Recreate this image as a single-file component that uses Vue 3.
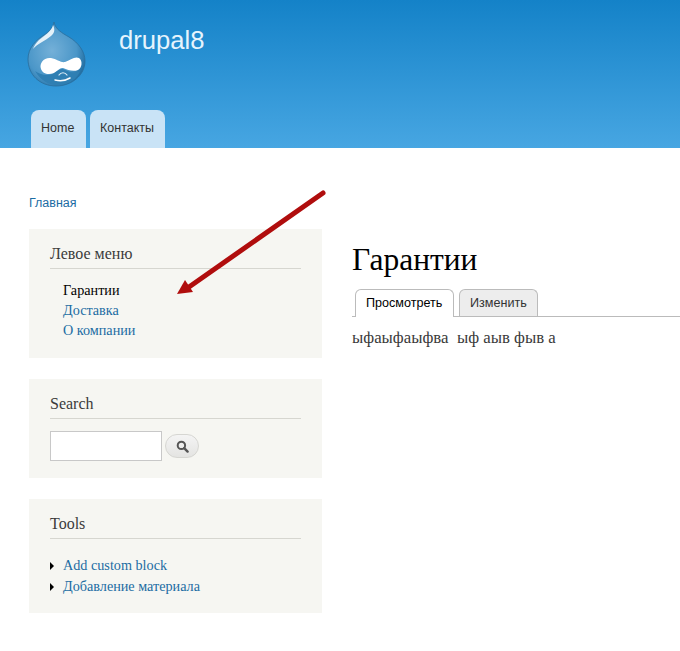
<template>
  <div class="page">
    <header class="head">
      <div class="brand">
        <svg class="logo" width="60" height="66" viewBox="0 0 60 66">
          <defs>
            <radialGradient id="drop" cx="0.42" cy="0.45" r="0.62">
              <stop offset="0" stop-color="#74b0d8" />
              <stop offset="0.7" stop-color="#4a96c8" />
              <stop offset="1" stop-color="#226fa3" />
            </radialGradient>
          </defs>
          <path d="M27 1 C28 8 35 12 42 16 C52 22 58 31 58 40 C58 54 45 65 29 65 C13 65 1 54 1 38 C1 27 9 19 17 14 C22 11 26 7 27 1 Z" fill="url(#drop)" stroke="#2a6d9c" stroke-width="0.8" />
          <path d="M26 4 C25 10 17 15 12 19 C9 22 7 25 6 28 C10 23 18 20 24 15 C28 12 28 8 26 4 Z" fill="#e4f1f9" />
          <path d="M8 50 C14 60 22 64 30 64 C42 64 50 58 53 50 C47 53 42 51 36 48 C31 47 27 54 20 54 C15 54 11 52 8 50 Z" fill="#2f7fb3" />
          <path d="M14 48 C12 42 17 36 24 37 C30 38 34 42 38 41 C43 39 48 35 52 37 C56 40 55 47 51 49 C46 51 41 49 36 47 C32 46 29 53 22 53 C18 53 15 51 14 48 Z" fill="#fff" />
          <path d="M28 59 C32 60 38 60 43 57" fill="none" stroke="#fff" stroke-width="1.5" stroke-linecap="round" />
          <path d="M32 54 C34 51 38 51 40 54" fill="none" stroke="#dcecf6" stroke-width="1.2" stroke-linecap="round" />
        </svg>
        <div class="site-name">drupal8</div>
      </div>
      <nav class="main-nav">
        <a class="main-tab home">Home</a>
        <a class="main-tab">Контакты</a>
      </nav>
    </header>

    <div class="crumb"><a>Главная</a></div>

    <div class="body">
      <aside class="side">
        <section class="block menu">
          <h2>Левое меню</h2>
          <ul class="plain">
            <li v-for="item in menu" :key="item.label" :class="{ active: item.active }">{{ item.label }}</li>
          </ul>
        </section>
        <section class="block search">
          <h2>Search</h2>
          <div class="search-row">
            <input class="search-input" type="text" />
            <button class="search-btn" aria-label="Search">
              <svg width="13" height="13" viewBox="0 0 13 13">
                <circle cx="5.4" cy="5.4" r="3.7" fill="none" stroke="#555" stroke-width="2" />
                <path d="M8.2 8.2 L11.6 11.6" stroke="#555" stroke-width="2.4" stroke-linecap="round" />
              </svg>
            </button>
          </div>
        </section>
        <section class="block tools">
          <h2>Tools</h2>
          <ul class="arrows">
            <li v-for="t in tools" :key="t">{{ t }}</li>
          </ul>
        </section>
      </aside>

      <main class="content">
        <h1>Гарантии</h1>
        <div class="tabs">
          <a class="tab current">Просмотреть</a>
          <a class="tab">Изменить</a>
        </div>
        <p class="text">ыфаыфаыфва&nbsp; ыф аыв фыв а</p>
      </main>
    </div>

    <svg class="arrow" width="160" height="115" viewBox="0 0 160 115">
      <path d="M147 4 L13 98" stroke="#b00d0d" stroke-width="5" stroke-linecap="round" />
      <path d="M1 105 L9 91 L17 103 Z" fill="#b00d0d" />
    </svg>
  </div>
</template>

<script setup>
const menu = [
  { label: 'Гарантии', active: true },
  { label: 'Доставка' },
  { label: 'О компании' },
]
const tools = ['Add custom block', 'Добавление материала']
</script>

<style>
html,
body {
  margin: 0;
  background: #fff;
}
</style>

<style scoped>
.page {
  position: relative;
  width: 680px;
  height: 651px;
  overflow: hidden;
  font-family: "Liberation Serif", serif;
}

.head {
  height: 148px;
  box-sizing: border-box;
  padding: 21px 0 0 27px;
  background: linear-gradient(#1482c8, #47a6e2);
  display: flex;
  flex-direction: column;
}

.brand {
  display: flex;
  height: 89px;
}

.logo {
  flex: none;
}

.site-name {
  margin: 4px 0 0 32px;
  font: 25.6px/30px "Liberation Sans", sans-serif;
  color: #e6f4fd;
}

.main-nav {
  display: flex;
  gap: 4px;
  padding-left: 4px;
}

.main-tab {
  height: 38px;
  padding: 0 10.5px 0 10px;
  background: #c9e3f6;
  border-radius: 8px 8px 0 0;
  color: #333;
  font: 12.5px/37px "Liberation Sans", sans-serif;
}

.home {
  width: 34.5px;
}

.crumb {
  margin: 47px 0 0 29px;
  font: 12.5px/16px "Liberation Sans", sans-serif;
}

.crumb a {
  color: #1b6ca3;
}

.body {
  display: flex;
  margin: 18px 0 0 29px;
}

.side {
  width: 293px;
  flex: none;
  display: flex;
  flex-direction: column;
  gap: 21px;
}

.block {
  background: #f6f6f2;
  padding: 15px 21px 0;
  box-sizing: border-box;
}

.menu {
  height: 129px;
}

.search {
  height: 99px;
}

.tools {
  height: 114px;
}

h2 {
  margin: 0;
  height: 24px;
  font-size: 16px;
  line-height: 20px;
  font-weight: 400;
  color: #3b3b3b;
  border-bottom: 1px solid #d6d6d0;
}

ul {
  margin: 0;
  padding: 0;
  list-style: none;
  font-size: 14.2px;
  color: #1b6ca3;
}

.plain {
  padding: 11px 0 0 13px;
}

.plain li {
  height: 20px;
  line-height: 20px;
}

.plain .active {
  color: #000;
}

.search-row {
  display: flex;
  align-items: center;
  gap: 3px;
  margin-top: 12px;
}

.search-input {
  width: 112px;
  height: 30px;
  box-sizing: border-box;
  border: 1px solid #c8c8c8;
  background: #fff;
  padding: 0;
  margin: 0;
}

.search-btn {
  width: 34px;
  height: 24px;
  padding: 0;
  border: 1px solid #d6d6d2;
  border-radius: 12px;
  background: linear-gradient(#f4f4f4, #e4e4e2);
  display: flex;
  align-items: center;
  justify-content: center;
}

.arrows {
  padding: 16px 0 0 13px;
}

.arrows li {
  position: relative;
  height: 21px;
  line-height: 21px;
}

.arrows li::before {
  content: "";
  position: absolute;
  left: -13px;
  top: 7px;
  border-left: 4px solid #000;
  border-top: 4px solid transparent;
  border-bottom: 4px solid transparent;
}

.content {
  margin-left: 30px;
  flex: 1;
}

h1 {
  margin: 12px 0 0;
  font-size: 31.5px;
  line-height: 38px;
  font-weight: 400;
  color: #000;
}

.tabs {
  display: flex;
  gap: 5px;
  margin-top: 10px;
  padding-left: 3px;
  height: 27px;
  border-bottom: 1px solid #bbb;
}

.tab {
  height: 27px;
  box-sizing: border-box;
  padding: 0 10px;
  border: 1px solid #bbb;
  border-bottom: none;
  border-radius: 6px 6px 0 0;
  background: #ededed;
  color: #333;
  font: 12.6px/26px "Liberation Sans", sans-serif;
}

.tab.current {
  height: 28px;
  padding: 0 10.6px 0 10px;
  background: #fff;
  color: #000;
}

.text {
  margin: 12px 0 0;
  font-size: 16.8px;
  line-height: 18px;
  color: #3b3b3b;
}

.arrow {
  position: absolute;
  left: 176px;
  top: 189px;
}
</style>
